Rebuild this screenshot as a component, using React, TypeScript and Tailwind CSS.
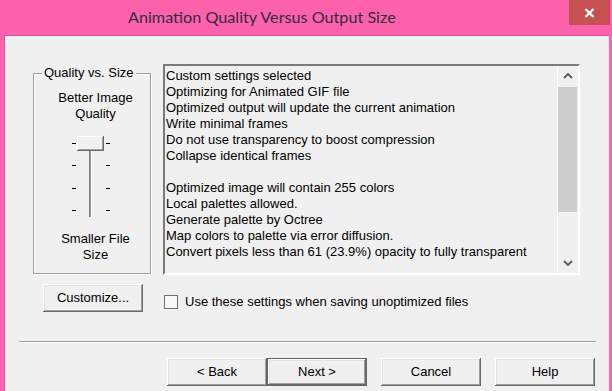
import React from 'react';

const lines = [
  'Custom settings selected',
  'Optimizing for Animated GIF file',
  'Optimized output will update the current animation',
  'Write minimal frames',
  'Do not use transparency to boost compression',
  'Collapse identical frames',
  '',
  'Optimized image will contain 255 colors',
  'Local palettes allowed.',
  'Generate palette by Octree',
  'Map colors to palette via error diffusion.',
  'Convert pixels less than 61 (23.9%) opacity to fully transparent',
];

const btn =
  'h-[28px] w-[100px] bg-[#f0f0f0] text-[13px] text-black shadow-[inset_-1px_-1px_#696969,inset_1px_1px_#ffffff,inset_-2px_-2px_#a0a0a0,inset_2px_2px_#e3e3e3]';

const Chevron = ({ up }: { up?: boolean }) => (
  <svg width="10" height="6" viewBox="0 0 10 6">
    <path d={up ? 'M1 5 L5 1 L9 5' : 'M1 1 L5 5 L9 1'} fill="none" stroke="#606060" strokeWidth="2" />
  </svg>
);

const Slider = () => (
  <svg width="40" height="83" viewBox="0 0 40 83" className="block">
    {/* track */}
    <rect x="18" y="16" width="1" height="66" fill="#7a7a7a" />
    <rect x="19" y="16" width="1" height="66" fill="#a0a0a0" />
    <rect x="20" y="16" width="1" height="66" fill="#ffffff" />
    {/* ticks */}
    {[8, 30, 53, 75].map(y => (
      <g key={y}>
        <rect x="1" y={y} width="4" height="1" fill="#000" />
        <rect x="35" y={y} width="4" height="1" fill="#000" />
      </g>
    ))}
    {/* thumb */}
    <rect x="6" y="1" width="27" height="15" fill="#696969" />
    <rect x="6" y="1" width="26" height="14" fill="#ffffff" />
    <rect x="7" y="2" width="25" height="13" fill="#a0a0a0" />
    <rect x="7" y="2" width="24" height="12" fill="#f0f0f0" />
  </svg>
);

export default function App() {
  return (
    <div
      className="w-[612px] h-[391px] bg-[#fe62ad] flex flex-col overflow-hidden"
      style={{ fontFamily: '"Liberation Sans", Arial, sans-serif' }}
    >
      {/* title bar */}
      <div className="h-[35px] flex items-start shrink-0">
        <div
          className="pl-[128px] pt-[5px] text-[16.2px] leading-[24px] text-[#342a3c]"
          style={{ fontFamily: 'Lato, "Open Sans", sans-serif' }}
        >
          Animation Quality Versus Output Size
        </div>
        <div className="ml-auto mr-[2px] w-[41px] h-[25px] bg-[#c75050] flex items-center justify-center">
          <svg width="11" height="10" viewBox="0 0 11 10">
            <path d="M1.5 1 L9.5 9 M9.5 1 L1.5 9" stroke="#fff" strokeWidth="2.4" />
          </svg>
        </div>
      </div>

      {/* client area */}
      <div className="flex-1 ml-[4px] mr-[3px] bg-[#f0f0f0] border-l border-t border-[#d9559c] text-[13px] leading-[16px] text-black">
        <div className="flex items-start pl-[28px] pt-[28px]">
          {/* group box */}
          <div className="relative mt-[9px] w-[118px] h-[201px] border border-[#a0a0a0] shadow-[inset_1px_1px_#ffffff,1px_1px_#ffffff]">
            <span className="absolute left-[8px] top-[-9px] px-[2px] bg-[#f0f0f0]">Quality vs. Size</span>
            <div className="pt-[16px] pl-[7px] text-center">
              <div>Better Image</div>
              <div>Quality</div>
            </div>
            <div className="mt-[13px] ml-[37px]">
              <Slider />
            </div>
            <div className="mt-[13px] pl-[7px] text-center">
              <div>Smaller File</div>
              <div>Size</div>
            </div>
          </div>

          {/* list box */}
          <div className="ml-[12px] w-[417px] h-[211px] flex border-2 border-t-[#7a7a7a] border-l-[#7a7a7a] border-r-[#ffffff] border-b-[#ffffff] bg-[#f0f0f0]">
            <div className="flex-1 pl-[1px] pt-[2px] whitespace-nowrap overflow-hidden">
              {lines.map((l, i) => (
                <div key={i} className="h-[16px]">{l}</div>
              ))}
            </div>
            <div className="w-[21px] flex flex-col border-l border-[#ffffff] bg-[#f0f0f0]">
              <div className="h-[20px] flex items-center justify-center">
                <Chevron up />
              </div>
              <div className="mt-[1px] h-[125px] bg-[#cdcdcd] mr-[1px]" />
              <div className="flex-1" />
              <div className="h-[20px] flex items-center justify-center">
                <Chevron />
              </div>
            </div>
          </div>
        </div>

        {/* customize row */}
        <div className="flex items-start mt-[9px] pl-[38px]">
          <button className={btn + ' w-[99px]'}>Customize...</button>
          <label className="ml-[21px] mt-[10px] flex items-center">
            <span className="w-[14px] h-[14px] border border-[#6e6e6e] bg-[#f8f8f8]" />
            <span className="ml-[7px]">Use these settings when saving unoptimized files</span>
          </label>
        </div>

        {/* separator */}
        <div className="mt-[29px] ml-[14px] w-[577px] h-[2px] border-t border-[#a0a0a0] border-b border-b-[#ffffff]" />

        {/* buttons */}
        <div className="flex mt-[15px] pl-[162px]">
          <button className={btn}>&lt; Back</button>
          <button className={btn + ' border border-[#646464]'}>Next &gt;</button>
          <button className={btn + ' ml-[14px]'}>Cancel</button>
          <button className={btn + ' ml-[14px]'}>Help</button>
        </div>
      </div>
    </div>
  );
}
